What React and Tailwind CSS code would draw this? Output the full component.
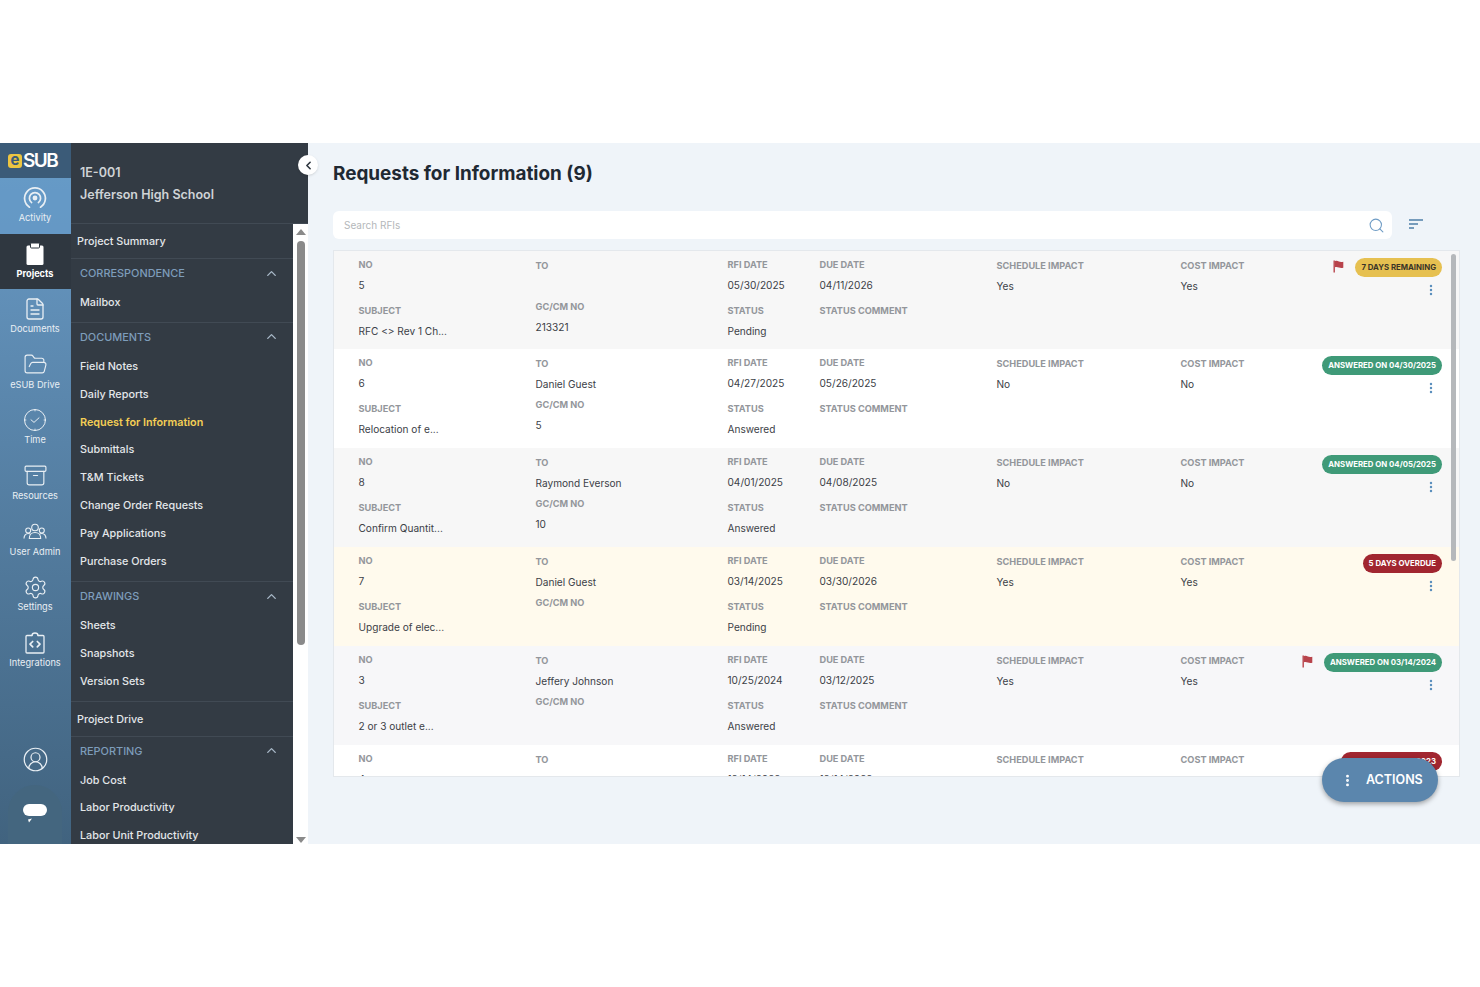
import { ChevronLeft, ChevronUp, Archive, FileText, FolderOpen, Settings, CircleUserRound, Search, EllipsisVertical } from 'lucide-react';

// Rail icons that lucide has no close match for
function ActivityIcon() {
  return (
    <svg width="24" height="24" viewBox="0 0 24 24" fill="none" stroke="currentColor" strokeWidth="1.7" strokeLinecap="round">
      <path d="M6.5 21.2a10.4 10.4 0 1 1 11 0" />
      <path d="M8.6 16.6a5.6 5.6 0 1 1 6.8 0" />
      <circle cx="12" cy="12" r="1.6" fill="currentColor" />
    </svg>
  );
}

function ProjectsIcon() {
  return (
    <svg width="20" height="24" viewBox="0 0 20 24" fill="white">
      <rect x="1.5" y="3.5" width="17" height="19.5" rx="1.5" />
      <rect x="5.5" y="1" width="9" height="5" rx="1" stroke="#2f3740" strokeWidth="1" />
    </svg>
  );
}

function TimeIcon() {
  return (
    <svg width="24" height="24" viewBox="0 0 24 24" fill="none" stroke="currentColor" strokeWidth="1" strokeLinecap="round" strokeLinejoin="round">
      <circle cx="12" cy="12" r="10.5" />
      <path d="M8 11.8l3 2.6 5-4.6" />
      <path d="M12 1.5v1.4M12 21.1v1.4M1.5 12h1.4M21.1 12h1.4" />
    </svg>
  );
}

function UsersIcon() {
  return (
    <svg width="24" height="18" viewBox="0 0 24 18" fill="none" stroke="currentColor" strokeWidth="1.1" strokeLinejoin="round">
      <circle cx="12" cy="4.5" r="3.3" />
      <circle cx="5.2" cy="7.5" r="2.5" />
      <circle cx="18.8" cy="7.5" r="2.5" />
      <path d="M1 15.5c0-3 1.7-5 4.2-5 1 0 1.8.3 2.4.8M23 15.5c0-3-1.7-5-4.2-5-1 0-1.8.3-2.4.8" />
      <path d="M6.3 15.5c0-3.6 2.4-6 5.7-6s5.7 2.4 5.7 6z" />
    </svg>
  );
}

function IntegrationsIcon() {
  return (
    <svg width="20" height="22" viewBox="0 0 20 22" fill="none" stroke="currentColor" strokeWidth="1.3" strokeLinecap="round" strokeLinejoin="round">
      <path d="M7 3.5H2a1 1 0 0 0-1 1V20a1 1 0 0 0 1 1h16a1 1 0 0 0 1-1V4.5a1 1 0 0 0-1-1h-5" />
      <path d="M7 3.5a3 2.5 0 0 1 6 0" />
      <path d="M7.7 9.5L5 12.2l2.7 2.7M12.3 9.5l2.7 2.7-2.7 2.7" strokeWidth="1.7" />
    </svg>
  );
}

function ChatIcon() {
  return (
    <svg width="24" height="20" viewBox="0 0 24 20" fill="white">
      <rect x="0" y="0" width="24" height="12" rx="6" />
      <path d="M5 15.5l4-1-3 4z" />
    </svg>
  );
}

function FlagIcon() {
  return (
    <svg width="11" height="13" viewBox="0 0 11 13" fill="#b8434b" className="-mt-[3px]">
      <path d="M0.5 0.5h1.4v12H0.5z" />
      <path d="M1.9 1.2c1.6-.8 2.6-.4 4 .3 1.3.5 2.6.5 4.4.2v6.1c-1.8.4-3.1.3-4.4-.2-1.4-.6-2.4-1-4-.3z" />
    </svg>
  );
}

const railItems = [
  { label: 'Activity', icon: <ActivityIcon />, bg: 'bg-[#659ac7]/70' },
  { label: 'Projects', icon: <ProjectsIcon />, active: true },
  { label: 'Documents', icon: <FileText size={24} strokeWidth={1.3} /> },
  { label: 'eSUB Drive', icon: <FolderOpen size={25} strokeWidth={1.1} /> },
  { label: 'Time', icon: <TimeIcon /> },
  { label: 'Resources', icon: <Archive size={25} strokeWidth={1.1} /> },
  { label: 'User Admin', icon: <UsersIcon /> },
  { label: 'Settings', icon: <Settings size={25} strokeWidth={1.1} /> },
  { label: 'Integrations', icon: <IntegrationsIcon /> },
];

const sections = [
  { type: 'link', label: 'Project Summary' },
  { type: 'group', label: 'CORRESPONDENCE', items: ['Mailbox'] },
  {
    type: 'group',
    label: 'DOCUMENTS',
    items: ['Field Notes', 'Daily Reports', 'Request for Information', 'Submittals', 'T&M Tickets', 'Change Order Requests', 'Pay Applications', 'Purchase Orders'],
  },
  { type: 'group', label: 'DRAWINGS', items: ['Sheets', 'Snapshots', 'Version Sets'] },
  { type: 'link', label: 'Project Drive' },
  { type: 'group', label: 'REPORTING', items: ['Job Cost', 'Labor Productivity', 'Labor Unit Productivity'] },
];

const rfis = [
  { no: '5', to: '', rfiDate: '05/30/2025', due: '04/11/2026', schedule: 'Yes', cost: 'Yes', subject: 'RFC <> Rev 1 Ch...', gc: '213321', status: 'Pending', badge: '7 DAYS REMAINING', tone: 'yellow', flag: true, bg: 'bg-[#f7f7f7]', h: 'h-[98px]' },
  { no: '6', to: 'Daniel Guest', rfiDate: '04/27/2025', due: '05/26/2025', schedule: 'No', cost: 'No', subject: 'Relocation of e...', gc: '5', status: 'Answered', badge: 'ANSWERED ON 04/30/2025', tone: 'green', bg: 'bg-white' },
  { no: '8', to: 'Raymond Everson', rfiDate: '04/01/2025', due: '04/08/2025', schedule: 'No', cost: 'No', subject: 'Confirm Quantit...', gc: '10', status: 'Answered', badge: 'ANSWERED ON 04/05/2025', tone: 'green', bg: 'bg-[#f7f7f7]' },
  { no: '7', to: 'Daniel Guest', rfiDate: '03/14/2025', due: '03/30/2026', schedule: 'Yes', cost: 'Yes', subject: 'Upgrade of elec...', gc: '', status: 'Pending', badge: '5 DAYS OVERDUE', tone: 'red', bg: 'bg-[#fffaed]' },
  { no: '3', to: 'Jeffery Johnson', rfiDate: '10/25/2024', due: '03/12/2025', schedule: 'Yes', cost: 'Yes', subject: '2 or 3 outlet e...', gc: '', status: 'Answered', badge: 'ANSWERED ON 03/14/2024', tone: 'green', flag: true, bg: 'bg-[#f7f7f9]' },
  // scrolled off below the list's edge, only the labels and the tops of the values show
  { no: '4', to: '', rfiDate: '12/14/2022', due: '12/14/2022', schedule: '', cost: '', badge: 'VOIDED ON 01/14/2023', tone: 'red', bg: 'bg-white', partial: true },
];

const badgeTones = {
  yellow: 'bg-[#e6c050] text-[#3a3428]',
  green: 'bg-[#3f9a78] text-white',
  red: 'bg-[#a12630] text-white',
};

function Rail() {
  return (
    <div className="w-[71px] shrink-0 flex flex-col bg-gradient-to-b from-[#6a9cc8] to-[#41637f] text-[#e9eff4]">
      <div className="h-[35px] bg-[#3b5b78] flex items-center pl-[8px] gap-px">
        <span className="w-[14px] h-[14px] rounded-[3px] bg-[#ecc541] text-[#3b5b78] text-[15px] leading-[12px] font-bold text-center">e</span>
        <span className="text-white text-[19px] leading-none font-semibold tracking-[-1.5px]">SUB</span>
      </div>
      {railItems.map((item) => (
        <div
          key={item.label}
          className={`h-[55.6px] pt-[7px] pr-px flex flex-col items-center text-[9.2px] leading-[12px] ${item.active ? 'bg-[#2f3740] text-white font-bold' : ''} ${item.bg ?? ''}`}
        >
          <div className="h-[26px] flex items-center justify-center">{item.icon}</div>
          <span className="mt-px">{item.label}</span>
        </div>
      ))}
      <div className="mt-auto pr-px flex flex-col items-center">
        <CircleUserRound size={27} strokeWidth={1.1} />
        <div className="mt-[12px] w-[54px] h-[59px] rounded-t-full bg-[#44667f] flex justify-center pt-[19px]">
          <ChatIcon />
        </div>
      </div>
    </div>
  );
}

function NavRow({ label }) {
  const active = label === 'Request for Information';
  return (
    <div className={`h-[27.9px] pl-[9px] pt-[2px] flex items-center text-[10.8px] ${active ? 'text-[#f4cf55] font-semibold' : 'text-[#e4e7ea] font-medium'}`}>
      {label}
    </div>
  );
}

function Sidebar() {
  return (
    <div className="w-[237px] shrink-0 bg-[#333b44] flex flex-col relative min-h-0">
      <div className="h-[81px] shrink-0 border-b border-[#414a54] pl-[9px] pt-[21px] text-[12.5px] font-semibold text-[#cfd3d6]">
        <div className="leading-[18px]">1E-001</div>
        <div className="leading-[18px] mt-[4px]">Jefferson High School</div>
      </div>
      {/* collapse toggle sits across the panel edge */}
      <div className="absolute right-[-10px] top-[12px] w-[20px] h-[20px] rounded-full bg-white shadow flex items-center justify-center z-10">
        <ChevronLeft size={13} strokeWidth={3} className="text-[#2f3740]" />
      </div>
      <div className="flex flex-1 min-h-0">
        <div className="flex-1 overflow-hidden">
          {sections.map((s) =>
            s.type === 'link' ? (
              <div key={s.label} className="h-[35px] pl-[6px] pt-[2px] flex items-center text-[10.8px] font-medium text-[#e4e7ea] border-b border-[#414a54]">
                {s.label}
              </div>
            ) : (
              <div key={s.label} className="pb-[6px] border-b border-[#414a54]">
                <div className="h-[27px] pl-[9px] pr-[14px] pt-px flex items-center justify-between text-[10.9px] text-[#7e9dbb] font-medium">
                  {s.label}
                  <ChevronUp size={15} strokeWidth={2.2} className="text-[#a9b9c8]" />
                </div>
                <div className="mt-[2px]">
                  {s.items.map((it) => (
                    <NavRow key={it} label={it} />
                  ))}
                </div>
              </div>
            ),
          )}
        </div>
        <div className="w-[15px] shrink-0 bg-white flex flex-col items-center pt-[5px]">
          <div className="w-0 h-0 border-x-[5px] border-x-transparent border-b-[6px] border-b-[#8a8a8a]" />
          <div className="w-[8px] h-[404px] mt-[6px] rounded-full bg-[#8a8a8a]" />
          <div className="mt-auto mb-[1px] w-0 h-0 border-x-[5px] border-x-transparent border-t-[6px] border-t-[#8a8a8a]" />
        </div>
      </div>
    </div>
  );
}

function Field({ label, value }) {
  return (
    <div>
      <div className="h-[14px] leading-[14px] text-[9.2px] font-bold text-[#93969b] whitespace-nowrap">{label}</div>
      <div className="h-[14px] leading-[14px] mt-[6px] text-[10.1px] text-[#3c4147] whitespace-nowrap">{value}</div>
    </div>
  );
}

function RfiRow({ rfi }) {
  return (
    <div className={`${rfi.h ?? 'h-[99px]'} shrink-0 grid grid-cols-[177px_192px_92px_177px_184px_1fr] pl-[24.5px] ${rfi.bg}`}>
      <div className="pt-[7px] flex flex-col gap-[12px]">
        <Field label="NO" value={rfi.no} />
        {!rfi.partial && <Field label="SUBJECT" value={rfi.subject} />}
      </div>
      <div className="pt-[8px] flex flex-col gap-[7px]">
        <Field label="TO" value={rfi.to} />
        {!rfi.partial && <Field label="GC/CM NO" value={rfi.gc} />}
      </div>
      <div className="pt-[7px] flex flex-col gap-[12px]">
        <Field label="RFI DATE" value={rfi.rfiDate} />
        {!rfi.partial && <Field label="STATUS" value={rfi.status} />}
      </div>
      <div className="pt-[7px] flex flex-col gap-[12px]">
        <Field label="DUE DATE" value={rfi.due} />
        {!rfi.partial && <Field label="STATUS COMMENT" value="" />}
      </div>
      <div className="pt-[8px]">
        <Field label="SCHEDULE IMPACT" value={rfi.schedule} />
      </div>
      <div className="pt-[8px] flex justify-between">
        <Field label="COST IMPACT" value={rfi.cost} />
        <div className="pr-[17px] -mt-[1px] flex flex-col items-end">
          <div className="flex items-center gap-[11px]">
            {rfi.flag && <FlagIcon />}
            <span className={`h-[19px] px-[6px] rounded-full flex items-center text-[7.8px] font-bold whitespace-nowrap ${badgeTones[rfi.tone]}`}>
              {rfi.badge}
            </span>
          </div>
          <EllipsisVertical size={14} strokeWidth={2.2} className="mt-[6px] mr-[4px] text-[#5b8fbd]" />
        </div>
      </div>
    </div>
  );
}

export default function App() {
  return (
    <div className="bg-white min-h-[987px] pt-[143px] font-['Inter',sans-serif]">
      <div className="h-[701px] flex overflow-hidden relative">
        <Rail />
        <Sidebar />
        <div className="flex-1 min-w-0 bg-[#eff4f9] pl-[25px] pr-[20px] flex flex-col">
          <h1 className="mt-[17px] h-[27px] leading-[27px] text-[18.9px] font-bold text-[#1f2933]">Requests for Information (9)</h1>
          <div className="mt-[24px] flex items-center">
            <div className="flex-1 h-[28px] bg-white rounded-md pl-[11px] pr-[7px] flex items-center justify-between">
              <span className="text-[10px] text-[#b4b7ba]">Search RFIs</span>
              <Search size={17} strokeWidth={1.5} className="text-[#6f9cc5]" />
            </div>
            <div className="w-[68px] pl-[17px] mb-[2px]">
              <svg width="14" height="10" viewBox="0 0 14 10" fill="none" stroke="#4f7fa8" strokeWidth="1.4">
                <path d="M0 1h14M0 5h9M0 9h5" />
              </svg>
            </div>
          </div>
          <div className="mt-[11px] h-[527px] w-full border border-[#e4e8ec] bg-white relative overflow-hidden flex flex-col">
            {rfis.map((r) => (
              <RfiRow key={r.no} rfi={r} />
            ))}
            {/* list scrollbar thumb */}
            <div className="absolute right-[3px] top-[3px] w-[5px] h-[307px] rounded-full bg-[#b5b8bb]" />
          </div>
        </div>
        <div className="absolute left-[1322px] top-[615px] w-[116px] h-[44px] rounded-full bg-[#5b86ad] shadow-[0_2px_5px_rgba(0,0,0,0.35)] flex items-center pl-[18px] pt-px gap-[11px] text-white text-[12.5px] font-semibold">
          <EllipsisVertical size={15} strokeWidth={2.6} />
          ACTIONS
        </div>
      </div>
    </div>
  );
}
